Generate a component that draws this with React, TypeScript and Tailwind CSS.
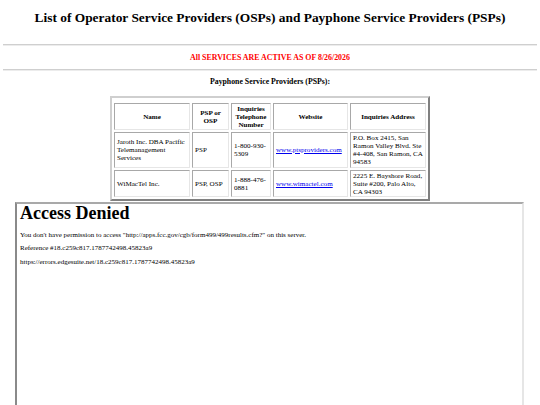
const ROWS = [
  {
    name: ['Jaroth Inc. DBA Pacific', 'Telemanagement', 'Services'],
    type: ['PSP'],
    phone: ['1-800-930-', '5309'],
    site: 'www.ptsproviders.com',
    address: ['P.O. Box 2415, San', 'Ramon Valley Blvd. Ste', '#4-408, San Ramon, CA', '94583'],
  },
  {
    name: ['WiMacTel Inc.'],
    type: ['PSP, OSP'],
    phone: ['1-888-476-', '0881'],
    site: 'www.wimactel.com',
    address: ['2225 E. Bayshore Road,', 'Suite #200, Palo Alto,', 'CA 94303'],
  },
]

const HEADERS = [['Name'], ['PSP or', 'OSP'], ['Inquiries', 'Telephone', 'Number'], ['Website'], ['Inquiries Address']]

const cell =
  'border border-t-[#a8a8a8] border-l-[#a8a8a8] border-r-[#e6e6e6] border-b-[#e6e6e6] px-[2px] py-0 align-middle whitespace-nowrap'

function Lines({ lines }: { lines: string[] }) {
  return (
    <>
      {lines.map((l, i) => (
        <span key={i} className="block">
          {l}
        </span>
      ))}
    </>
  )
}

export default function App() {
  return (
    <div className="min-h-[405px] bg-white font-['Liberation_Serif',serif] text-black">
      <h1 className="pt-[9px] text-center text-[13.4px] font-bold leading-[17px]">
        List of Operator Service Providers (OSPs) and Payphone Service Providers (PSPs)
      </h1>

      <div className="mx-[3px] mt-[18px] border-t border-b border-t-[#cfcfcf] border-b-[#ececec]" />

      <p className="mt-[8px] text-center text-[7.9px] font-bold leading-[8px] text-[#ff0000]">
        All SERVICES ARE ACTIVE AS OF 8/26/2026
      </p>

      <div className="mx-[3px] mt-[7px] border-t border-b border-t-[#cfcfcf] border-b-[#ececec]" />

      <p className="mt-[7px] text-center text-[7.8px] font-bold leading-[8px]">
        Payphone Service Providers (PSPs):
      </p>

      {/* Providers table */}
      <div className="mt-[10px] flex justify-center">
        <div className="w-[320px] border-2 border-t-[#cfcfcf] border-l-[#cfcfcf] border-r-[#808080] border-b-[#808080] pt-[3px]">
          <table className="w-full table-fixed border-separate border-spacing-[2px] text-[7.1px] leading-[8px]">
            <colgroup>
              <col className="w-[76px]" />
              <col className="w-[37px]" />
              <col className="w-[40px]" />
              <col className="w-[75px]" />
              <col />
            </colgroup>
            <thead>
              <tr className="h-[27px] font-bold">
                {HEADERS.map((h) => (
                  <th key={h[0]} className={cell}>
                    <Lines lines={h} />
                  </th>
                ))}
              </tr>
            </thead>
            <tbody>
              {ROWS.map((r, i) => (
                <tr key={r.site} className={i === 0 ? 'h-[36px]' : 'h-[27px]'}>
                  <td className={cell}>
                    <Lines lines={r.name} />
                  </td>
                  <td className={cell}>
                    <Lines lines={r.type} />
                  </td>
                  <td className={cell}>
                    <Lines lines={r.phone} />
                  </td>
                  <td className={cell}>
                    <a href="#" className="text-[#0000ee] underline">{r.site}</a>
                  </td>
                  <td className={cell}>
                    <Lines lines={r.address} />
                  </td>
                </tr>
              ))}
            </tbody>
          </table>
        </div>
      </div>

      {/* Embedded error frame */}
      <div className="ml-[15px] mt-[1px] h-[220px] w-[509px] border-2 border-t-[#a9a9a9] border-l-[#8a8a8a] border-r-[#e6e6e6] border-b-[#e6e6e6] px-[3px]">
        <h2 className="text-[18px] font-bold leading-[18px]">Access Denied</h2>
        <p className="mt-[9px] text-[7px] leading-[8px]">
          You don't have permission to access "http://apps.fcc.gov/cgb/form499/499results.cfm?" on this server.
        </p>
        <p className="mt-[5px] text-[7px] leading-[8px]">Reference #18.c259c817.1787742498.45823a9</p>
        <p className="mt-[6px] text-[7px] leading-[8px]">
          https://errors.edgesuite.net/18.c259c817.1787742498.45823a9
        </p>
      </div>
    </div>
  )
}
